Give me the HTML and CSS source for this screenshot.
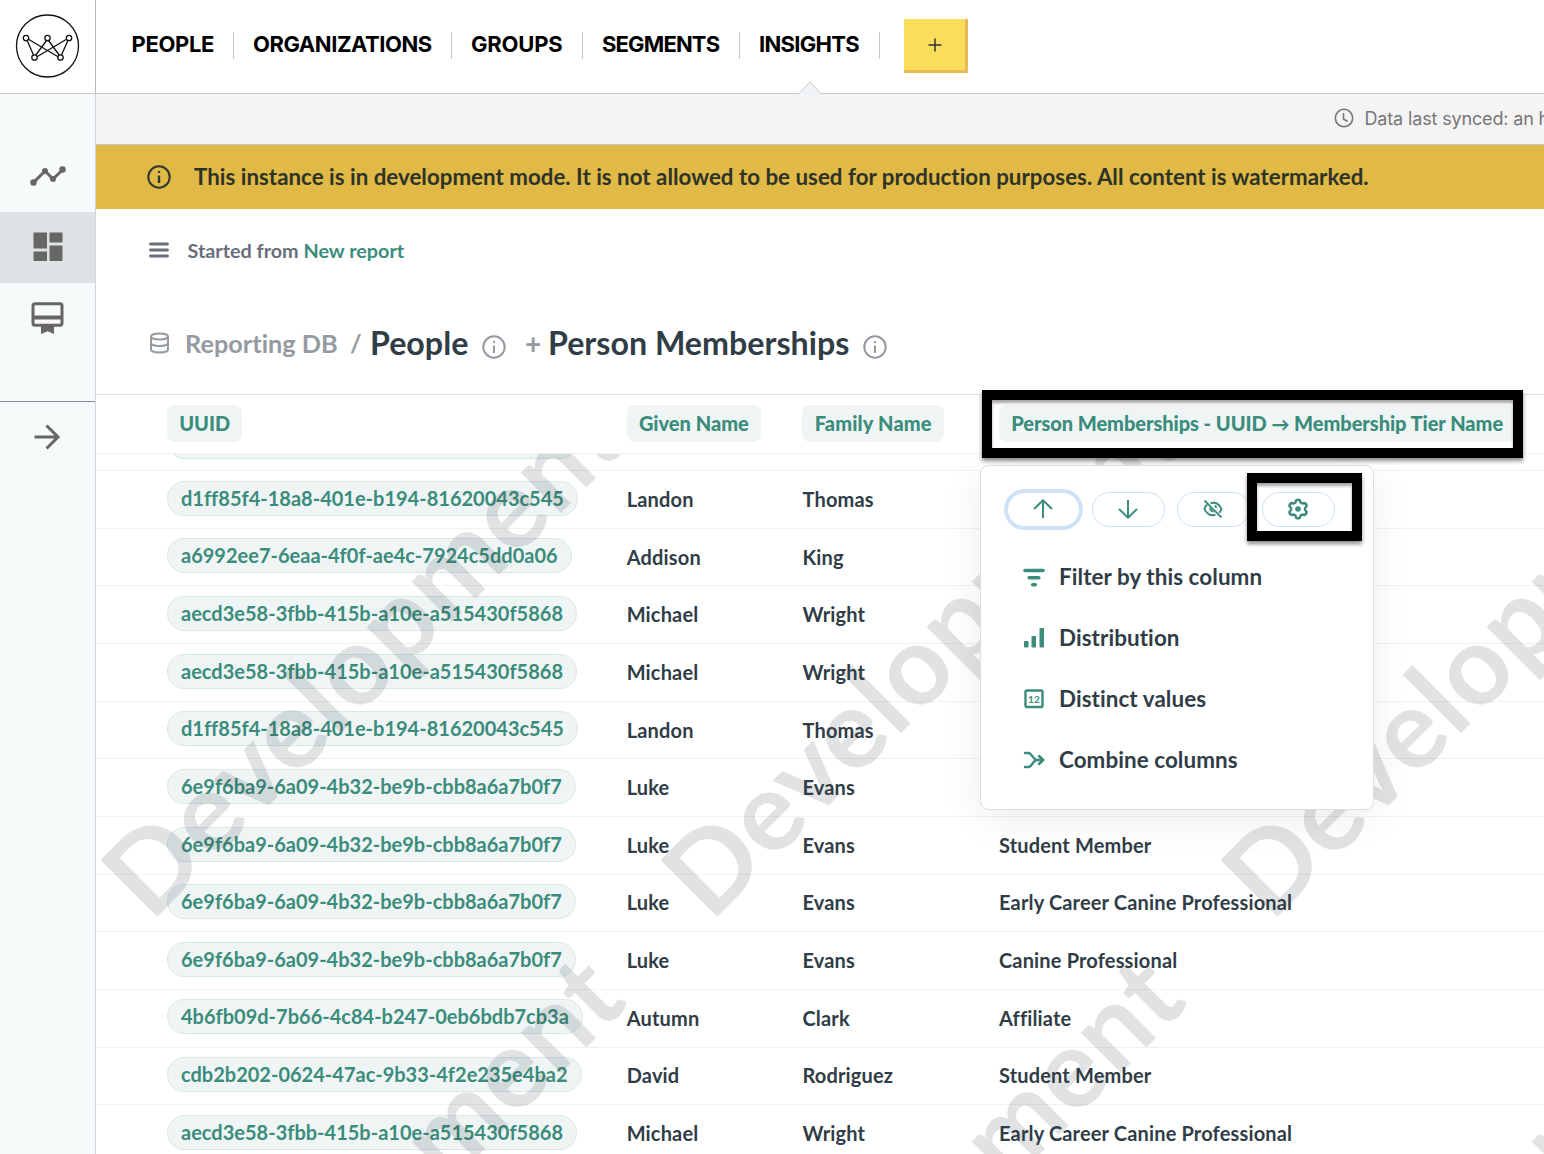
FILE: index.html
```
<!DOCTYPE html>
<html lang="en">
<head>
<meta charset="UTF-8">
<meta name="viewport" content="width=device-width, initial-scale=1.0">
<title>Insights - Person Memberships</title>
<link rel="stylesheet" href="styles.css">
</head>
<body>
<header class="topbar">
    <a class="logo">
        <svg width="65" height="64" viewBox="-0.5 0 65 64" fill="none" stroke="#111" stroke-width="1.3">
            <circle cx="32" cy="32" r="31"/>
            <path d="M11.5 26.3L18 41M13 25.2L42.500 42.700M31 26.500L20 41.500M33 26.500L44 41.500M51 25.200L21.500 42.700M52.500 26.300L46 41"/>
            <g fill="#fff"><circle cx="10.500" cy="24" r="2.700"/><circle cx="32" cy="24" r="2.700"/><circle cx="53.500" cy="24" r="2.700"/><circle cx="19" cy="43.500" r="2.700"/><circle cx="45" cy="43.500" r="2.700"/></g>
        </svg>
    </a>
    <nav class="nav">
        <a class="people">PEOPLE</a>
        <a class="organizations">ORGANIZATIONS</a>
        <a class="groups">GROUPS</a>
        <a class="segments">SEGMENTS</a>
        <a class="insights">INSIGHTS
            <svg class="notch" width="24" height="14" viewBox="0 0 24 14"><path d="M1 12.500L12 1L23 12.500V14H1z" fill="#f0f3f5"/><path d="M1 12.500L12 1L23 12.500" fill="none" stroke="#c8c8c8"/></svg>
        </a>
    </nav>
    <button class="add">
        <svg width="14" height="14" viewBox="0 0 14 14"><path d="M7 0.500v13M0.500 7h13" stroke="#333" stroke-width="1.500"/></svg>
    </button>
</header>
<div class="layout">
    <aside class="sidebar">
        <a class="side-item">
            <svg width="36" height="20" viewBox="0 0 36 20" fill="#666"><path d="M3.500 16.500L15 5l8 8L32.500 4" fill="none" stroke="#666" stroke-width="3"/><circle cx="3.500" cy="16.500" r="3.200"/><circle cx="15" cy="5" r="3"/><circle cx="23" cy="13" r="3"/><circle cx="32.500" cy="3.500" r="3.200"/></svg>
        </a>
        <a class="side-item active">
            <svg width="30" height="30" viewBox="0 0 30 30" fill="#666"><path d="M0.500 0.500h13.500v16H0.500zM16.500 0.500H29.500v10H16.500zM0.500 19.500h13.500v9.500H0.500zM16.500 13.500H29.500V29H16.500z"/></svg>
        </a>
        <a class="side-item">
            <svg width="33" height="32" viewBox="0 0 33 32" fill="none" stroke="#666" stroke-width="3"><rect x="2" y="1.700" width="29" height="21.500" rx="2"/><path d="M2 15.500h29" stroke-width="4"/><path d="M10 23v9l6.500-2.800 6.500 2.800V23z" fill="#666" stroke="none"/></svg>
        </a>
        <a class="expand">
            <svg width="27" height="26" viewBox="0 0 27 26" fill="none" stroke="#666" stroke-width="3"><path d="M0.500 13h24M12.500 1.500L24 13 12.500 24.500"/></svg>
        </a>
    </aside>
    <main class="content">
        <div class="sync">
            <svg width="20" height="20" viewBox="0 0 20 20" fill="none" stroke="#777" stroke-width="1.600"><circle cx="10" cy="10" r="8.700"/><path d="M9.500 5v6l4 2.500"/></svg>
            <span>Data last synced: an hour ago</span>
        </div>
        <div class="banner">
            <svg width="24" height="24" viewBox="0 0 24 24" fill="none" stroke="#2e3a2c" stroke-width="2"><circle cx="12" cy="12" r="10.700"/><path d="M12 10.500v7.500" stroke-width="2.400"/><path d="M12 6v2" stroke-width="2.200"/></svg>
            <span>This instance is in development mode. It is not allowed to be used for production purposes. All content is watermarked.</span>
        </div>
        <div class="started">
            <svg width="20" height="16" viewBox="0 0 20 16" stroke="#696e7b" stroke-width="2.800" stroke-linecap="round"><path d="M1.500 2h17M1.500 8h17M1.500 14h17"/></svg>
            <span>Started from <a>New report</a></span>
        </div>
        <div class="title">
            <svg class="db" width="20" height="22" viewBox="0 0 20 22" fill="none" stroke="#949aa0" stroke-width="2"><ellipse cx="10.500" cy="4.500" rx="8.500" ry="3"/><path d="M2 4.500v13c0 1.700 3.800 3 8.500 3s8.500-1.300 8.500-3v-13M2 11c0 1.700 3.800 3 8.500 3s8.500-1.300 8.500-3"/></svg>
            <span class="source">Reporting DB</span>
            <span class="slash">/</span>
            <h1 class="people-title">People</h1>
            <svg class="info" width="24" height="24" viewBox="0 0 24 24" fill="none" stroke="#949aa0" stroke-width="2"><circle cx="12" cy="12" r="10.700"/><path d="M12 10.500v7.500M12 6v2"/></svg>
            <span class="plus">+</span>
            <h1 class="memberships-title">Person Memberships</h1>
            <svg class="info" width="24" height="24" viewBox="0 0 24 24" fill="none" stroke="#949aa0" stroke-width="2"><circle cx="12" cy="12" r="10.700"/><path d="M12 10.500v7.500M12 6v2"/></svg>
        </div>
        <section class="table">
            <div class="row head">
                <span><b class="col">UUID</b></span>
                <span><b class="col">Given Name</b></span>
                <span><b class="col family">Family Name</b></span>
                <span><b class="col tier">Person Memberships - UUID <i class="arrow">→</i> Membership Tier Name</b></span>
            </div>
            <div class="rows">
                <div class="row first"><span><a class="pill"></a></span></div>
                <div class="row"><span><a class="pill">d1ff85f4-18a8-401e-b194-81620043c545</a></span><span>Landon</span><span>Thomas</span></div>
                <div class="row"><span><a class="pill">a6992ee7-6eaa-4f0f-ae4c-7924c5dd0a06</a></span><span>Addison</span><span>King</span></div>
                <div class="row"><span><a class="pill">aecd3e58-3fbb-415b-a10e-a515430f5868</a></span><span>Michael</span><span>Wright</span></div>
                <div class="row"><span><a class="pill">aecd3e58-3fbb-415b-a10e-a515430f5868</a></span><span>Michael</span><span>Wright</span></div>
                <div class="row"><span><a class="pill">d1ff85f4-18a8-401e-b194-81620043c545</a></span><span>Landon</span><span>Thomas</span></div>
                <div class="row"><span><a class="pill">6e9f6ba9-6a09-4b32-be9b-cbb8a6a7b0f7</a></span><span>Luke</span><span>Evans</span></div>
                <div class="row"><span><a class="pill">6e9f6ba9-6a09-4b32-be9b-cbb8a6a7b0f7</a></span><span>Luke</span><span>Evans</span><span>Student Member</span></div>
                <div class="row"><span><a class="pill">6e9f6ba9-6a09-4b32-be9b-cbb8a6a7b0f7</a></span><span>Luke</span><span>Evans</span><span>Early Career Canine Professional</span></div>
                <div class="row"><span><a class="pill">6e9f6ba9-6a09-4b32-be9b-cbb8a6a7b0f7</a></span><span>Luke</span><span>Evans</span><span>Canine Professional</span></div>
                <div class="row"><span><a class="pill">4b6fb09d-7b66-4c84-b247-0eb6bdb7cb3a</a></span><span>Autumn</span><span>Clark</span><span>Affiliate</span></div>
                <div class="row"><span><a class="pill">cdb2b202-0624-47ac-9b33-4f2e235e4ba2</a></span><span>David</span><span>Rodriguez</span><span>Student Member</span></div>
                <div class="row"><span><a class="pill">aecd3e58-3fbb-415b-a10e-a515430f5868</a></span><span>Michael</span><span>Wright</span><span>Early Career Canine Professional</span></div>
                <!-- Watermark tile repeats every 560px -->
                <svg class="watermark" width="1448" height="700">
                    <defs>
                        <pattern id="mark" x="0" y="-84" width="560" height="560" patternUnits="userSpaceOnUse">
                            <text class="mark-text" transform="translate(55 553) rotate(-45)">Development</text>
                        </pattern>
                    </defs>
                    <rect width="1448" height="700" fill="url(#mark)"/>
                </svg>
            </div>
        </section>
    </main>
</div>

<div class="popover">
    <div class="actions">
        <button class="focus"><svg width="20" height="20" viewBox="0 0 20 20"><path d="M10 19V1.500M1 10l9-8.700 9 8.700"/></svg></button>
        <button><svg width="20" height="20" viewBox="0 0 20 20"><path d="M10 1v17.500M1 10l9 8.700 9-8.700"/></svg></button>
        <button><svg width="20" height="20" viewBox="0 0 20 20"><path d="M1.500 1.500l17 17" stroke-width="1.800"/><path d="M7.500 4.200C13 2.500 17 6 18.500 10c-.6 1.600-1.300 2.800-2.300 3.800M4.200 5.500C3 6.500 2 8 1.500 10c1.500 4.200 5.700 7.300 11 5.700"/><path d="M6.500 8c-1 3 1.500 6 5 5.200z" fill="#3b8c7b" stroke="none"/><path d="M11.500 6.700c1 .3 1.700 1 2 2"/></svg></button>
        <button><svg width="22" height="22" viewBox="0 0 22 22"><path stroke-width="2.400" stroke-linejoin="round" d="M9 2.500Q11 .8 13 2.500L13.600 4.600 15.300 5.500 17.300 5Q19.700 5.800 19.600 8.300L18 10v2l1.600 1.700Q19.700 16.200 17.300 17L15.300 16.500 13.600 17.400 13 19.500Q11 21.200 9 19.500L8.400 17.400 6.700 16.500 4.700 17Q2.300 16.200 2.400 13.700L4 12v-2L2.400 8.300Q2.300 5.800 4.700 5L6.700 5.500 8.400 4.600z"/><circle cx="11" cy="11" r="2.800" fill="#3b8c7b" stroke="none"/></svg></button>
    </div>
    <a class="menu-item">
        <svg width="22" height="22" viewBox="0 0 22 22" fill="none" stroke="#3b8c7b" stroke-width="3.600" stroke-linecap="round"><path d="M2 4.500h18M6.200 11.800h9.600M9.700 18.700h2.600"/></svg>
        Filter by this column
    </a>
    <a class="menu-item">
        <svg width="22" height="22" viewBox="0 0 22 22" fill="#3b8c7b"><rect x="1" y="14" width="4.500" height="6.500" rx="1"/><rect x="8.500" y="9" width="4.500" height="11.500" rx="1"/><rect x="16.500" y="1" width="4.500" height="19.500" rx="1"/></svg>
        Distribution
    </a>
    <a class="menu-item">
        <svg width="22" height="22" viewBox="0 0 22 22"><rect x="2.500" y="2.500" width="17" height="16.500" rx="1.500" fill="none" stroke="#3b8c7b" stroke-width="2.400"/><text class="digits" x="11" y="14.500" text-anchor="middle">12</text></svg>
        Distinct values
    </a>
    <a class="menu-item">
        <svg width="22" height="22" viewBox="0 0 22 22" fill="none" stroke="#3b8c7b" stroke-width="2.400" stroke-linecap="round" stroke-linejoin="round"><path d="M2 4h3.500c3 0 5 7 8.500 7h6M2 18h3.500c3 0 5-7 8.500-7M16 7l4.300 4-4.300 4"/></svg>
        Combine columns
    </a>
</div>
<div class="highlight column-highlight"></div>
<div class="highlight gear-highlight"></div>
</body>
</html>
```
FILE: styles.css
```
* {
    box-sizing: border-box;
}
body {
    margin: 0;
    width: 1544px;
    height: 1154px;
    overflow: hidden;
    position: relative;
    font-family: Lato, sans-serif;
    font-weight: 700;
    font-variant-ligatures: none;
    color: #303d46;
    background: #fff;
}
svg {
    display: block;
    flex: none;
}
button {
    padding: 0;
    display: flex;
    align-items: center;
    justify-content: center;
}
.topbar {
    height: 94px;
    display: flex;
    border-bottom: 1px solid #c8c8c8;
}
.logo {
    width: 96px;
    padding: 14px 0 0 15px;
    border-right: 1px solid #b8b8b8;
}
.nav {
    display: flex;
    padding: 32px 0 0 16px;
    font-family: Inter, sans-serif;
    font-size: 22px;
    line-height: 25px;
    letter-spacing: -0.45px;
    color: #000;
}
.nav a {
    position: relative;
    height: 27px;
    padding-left: 19px;
    border-right: 1px solid #c8c8c8;
    white-space: nowrap;
}
.nav .people { width: 122px; padding-left: 19.5px; letter-spacing: -0.35px; }
.organizations { width: 218px; }
.groups { width: 131px; letter-spacing: -0.2px; }
.segments { width: 157px; letter-spacing: -0.85px; }
.insights { width: 140px; letter-spacing: -0.7px; }
.notch {
    position: absolute;
    left: 58px;
    top: 49px;
}
.add {
    width: 64px;
    height: 54px;
    margin: 19px 0 0 24px;
    background: #fadd5a;
    border: 0 solid #e8b954;
    border-width: 0 3px 3px 0;
}
.layout {
    display: flex;
    height: 1060px;
}
.sidebar {
    width: 96px;
    flex: none;
    padding-top: 47px;
    background: #f6fafb;
    border-right: 1px solid #cfd5e0;
}
.side-item {
    height: 71px;
    padding-bottom: 1px;
    display: flex;
    align-items: center;
    justify-content: center;
}
.active {
    background: #dde3e5;
}
.expand {
    height: 72px;
    margin-top: 47px;
    padding-bottom: 2px;
    display: flex;
    align-items: center;
    justify-content: center;
    border-top: 1px solid #888c92;
}
.content {
    width: 1448px;
    flex: none;
}
.sync {
    height: 51px;
    padding: 0 0 2px 1238px;
    display: flex;
    align-items: center;
    gap: 10.5px;
    background: #f4f4f4;
    border-bottom: 1px solid #c8c8c8;
    font-family: Inter, sans-serif;
    font-size: 18px;
    font-weight: 400;
    letter-spacing: -0.15px;
    color: #777;
    white-space: nowrap;
    overflow: hidden;
}
.banner {
    height: 64px;
    padding: 0 0 1px 51px;
    display: flex;
    align-items: center;
    gap: 23px;
    background: #e0b946;
    color: #2e3327;
    font-size: 22.3px;
    letter-spacing: 0.02px;
    white-space: nowrap;
}
.started {
    height: 84px;
    padding: 0 0 2px 53px;
    display: flex;
    align-items: center;
    gap: 18.5px;
    font-size: 19.8px;
    color: #696e7b;
}
.started a {
    color: #3b8c7b;
}
.title {
    height: 101px;
    padding: 0 0 1px 53px;
    display: flex;
    align-items: center;
    white-space: nowrap;
    color: #949aa0;
}
.title h1 {
    margin: 0;
    padding-bottom: 2px;
    font-size: 32.2px;
    color: #303d46;
}
.source {
    width: 165px;
    margin-left: 16px;
    font-size: 25.3px;
}
.slash {
    width: 20px;
    font-size: 25px;
}
.people-title {
    width: 112px;
}
.info {
    margin-top: 7px;
}
.plus {
    margin-left: 19px;
    width: 23px;
    font-size: 28px;
}
.memberships-title {
    width: 315px;
}
.table {
    border-top: 1px solid #dcdfe1;
    font-size: 20px;
}
.row {
    height: 57.650px;
    padding-left: 71px;
    display: grid;
    grid-template-columns: 459.7px 175.8px 196.500px 1fr;
    align-items: center;
    border-bottom: 1px solid #f0f2f3;
    white-space: nowrap;
}
.row > span {
    padding-bottom: 1px;
    letter-spacing: 0.16px;
}
.row > span:first-child {
    padding-bottom: 2.5px;
    letter-spacing: 0;
}
.head {
    height: 59px;
    color: #3b8c7b;
}
.row.head > span {
    padding: 0 0 1px;
    letter-spacing: 0;
}
.col {
    display: inline-block;
    height: 37px;
    padding: 0 12.200px;
    line-height: 37px;
    border-radius: 8px;
    background: #eff5f5;
}
.family {
    letter-spacing: 0.15px;
}
.tier {
    letter-spacing: -0.04px;
}
.arrow {
    font-style: normal;
    font-size: 18px;
}
.rows {
    position: relative;
    height: 700px;
    overflow: hidden;
}
.first {
    margin-top: -40.500px;
}
.first .pill {
    width: 410px;
    margin-top: 2px;
    vertical-align: top;
}
.pill {
    display: inline-block;
    height: 35px;
    padding: 0 13px;
    line-height: 32px;
    border: 1px solid #d8e8e5;
    border-radius: 18px;
    background: #eff5f5;
    color: #3b8c7b;
}
.watermark {
    position: absolute;
    left: 0;
    top: 0;
}
.mark-text {
    font: 700 111px Lato, sans-serif;
    letter-spacing: 1px;
    fill: rgba(48, 61, 70, 0.15);
}
.popover {
    position: absolute;
    left: 980px;
    top: 465px;
    width: 394px;
    height: 345px;
    padding: 26px 26px 0;
    background: #fff;
    border: 1px solid #dcdfe1;
    border-radius: 9px;
    box-shadow: 0 8px 40px rgba(0, 0, 0, 0.08);
}
.actions {
    display: flex;
    gap: 12px;
    margin-bottom: 19px;
}
.actions button {
    width: 73px;
    height: 35px;
    padding: 0 1px 1px 0;
    background: #fff;
    border: 1px solid #cfe1f5;
    border-radius: 18px;
}
.actions .focus {
    box-shadow: 0 0 0 3px #cfe1f5;
}
.actions svg {
    fill: none;
    stroke: #3b8c7b;
    stroke-width: 2;
}
.menu-item {
    height: 61px;
    padding-left: 16px;
    display: flex;
    align-items: center;
    gap: 14px;
    font-size: 22.4px;
    letter-spacing: 0.08px;
}
.digits {
    font: 700 10px Lato, sans-serif;
    fill: #3b8c7b;
}
.highlight {
    position: absolute;
    height: 68px;
    border: 10px solid #000;
    box-shadow: 0 3px 4px rgba(0, 0, 0, 0.45), inset 0 3px 3px rgba(0, 0, 0, 0.35);
}
.column-highlight {
    left: 982px;
    top: 390px;
    width: 541px;
}
.gear-highlight {
    left: 1247px;
    top: 473px;
    width: 115px;
}
```
